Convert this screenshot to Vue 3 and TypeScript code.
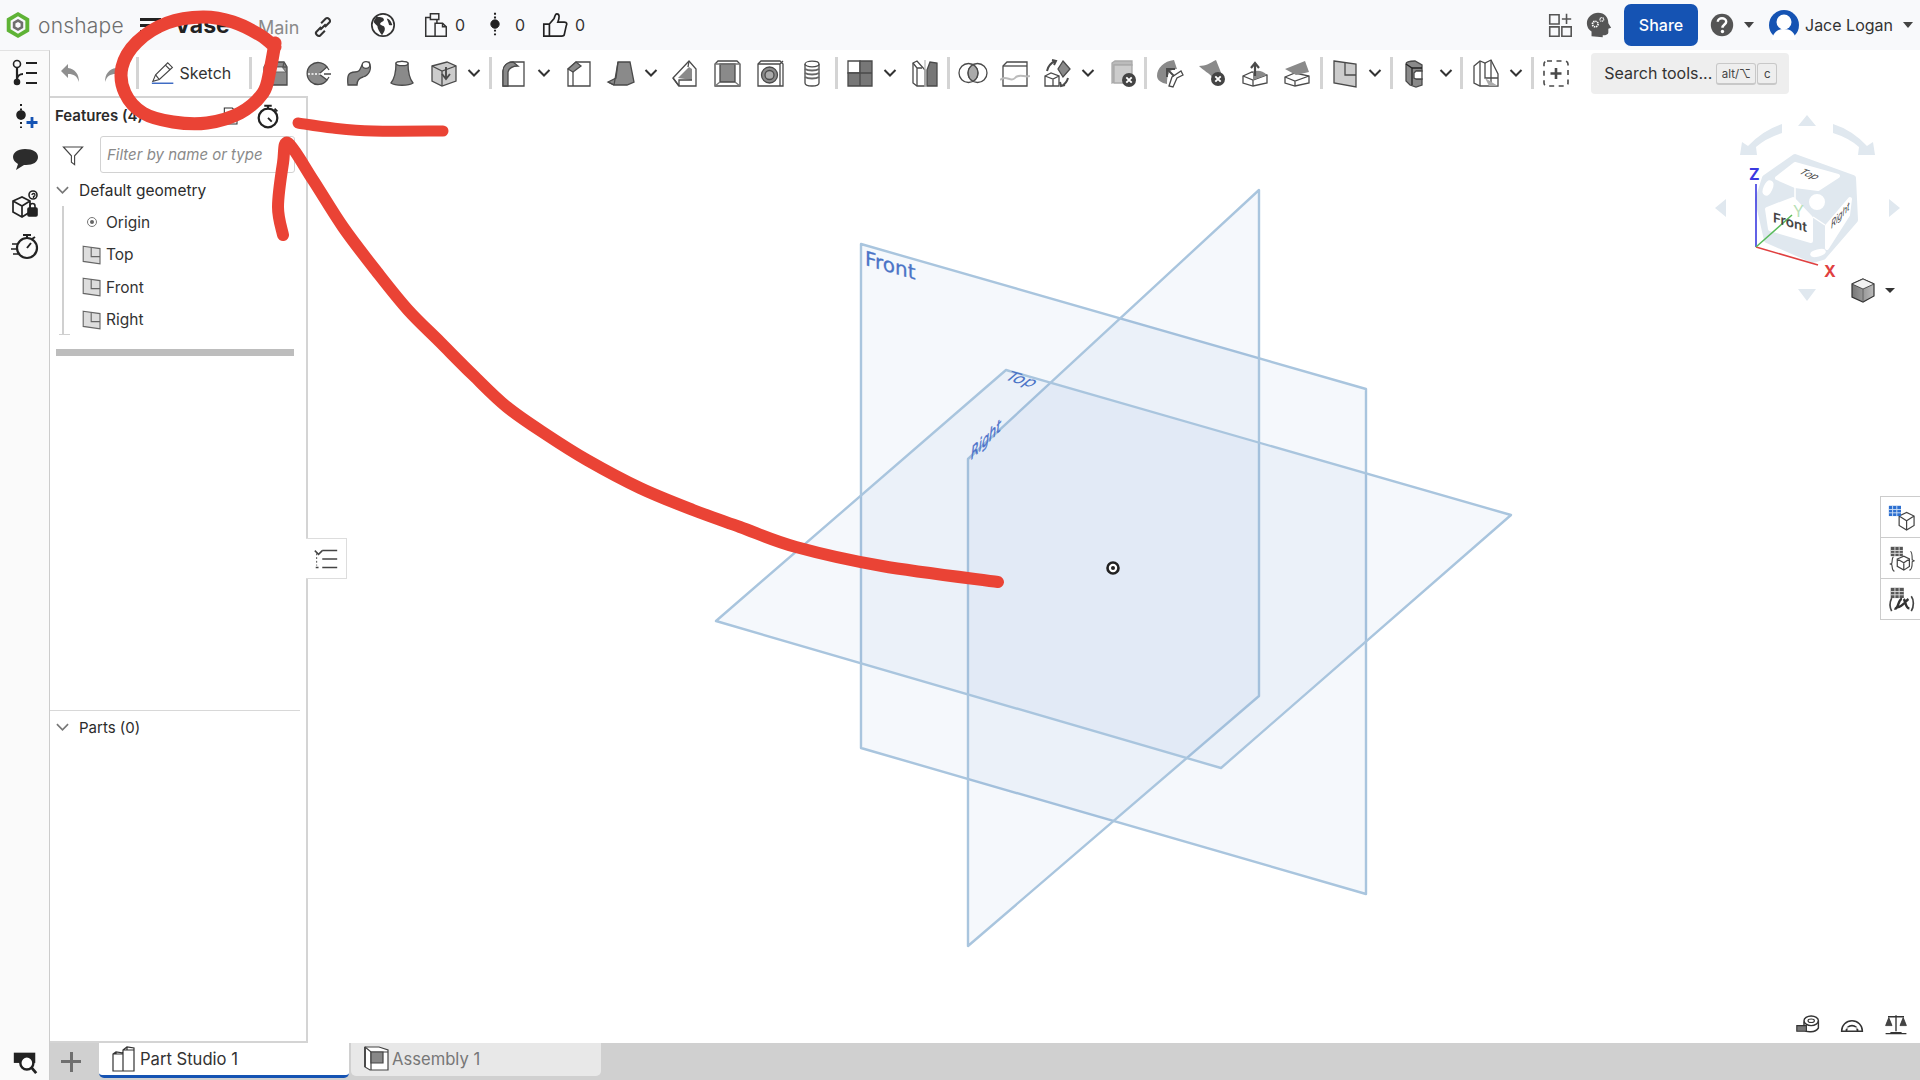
<script setup lang="ts">
const G = '#8a8a8a'
const icons: Record<string, string> = {
  undo: `<path d="M12 6 5 13l7 7v-4c6 0 9 2 11 8 0-8-4-13-11-14z" fill="#8f8f8f" stroke="none"/>`,
  redo: `<path d="M18 6l7 7-7 7v-4c-6 0-9 2-11 8 0-8 4-13 11-14z" fill="#8f8f8f" stroke="none"/>`,
  pencil: `<path d="M3 24l3-7L19 4l5 5-14 13z" fill="#fff"/><path d="M16.500 6.500l5 5M6 17l4 5"/><path d="M2 26h23" stroke="#3f6cc4" stroke-width="1.600"/>`,
  extrude: `<path d="M4 9l3-5h17l3 5v18H4z" fill="${G}"/><path d="M4 9h23M7 4l1 5M24 4l-1 5" stroke="#555"/><path d="M9 9h13l4 5H8z" fill="#eee" stroke="#666" stroke-width="1"/>`,
  revolve: `<path d="M25 9a11 11 0 1 0 0 13l-8-6z" fill="${G}"/><path d="M6 16h23" stroke="#fff" stroke-dasharray="2 1.500"/><path d="M22 16h7M25 9l2 3M25 22l2-3"/>`,
  sweep: `<path d="M4 27c-1-9 0-13 7-13 5 0 5-3 7-7l7-3c3 6 1 13-6 15-4 1-6 3-6 8z" fill="${G}"/><ellipse cx="22" cy="7" rx="3.800" ry="3.400" fill="#fff"/>`,
  loft: `<path d="M9 5c2-2 10-2 12 0 0 8 1 15 5 20-4 3-18 3-22 0 4-5 5-12 5-20z" fill="${G}"/><ellipse cx="15" cy="5.500" rx="6" ry="2.200" fill="#fff"/>`,
  thicken: `<path d="M3 8l15-4 9 4v15l-14 5-10-5z" fill="#ccc"/><path d="M3 8l10 5 14-5M13 13v15"/><path d="M17 9v11M13 16l4 5 4-5" stroke-width="1.900"/>`,
  fillet: `<path d="M4 13c0-5 4-9 10-9h11v24H4z" fill="#fff"/><path d="M4 13c0-5 4-9 10-9l5 4c-6 0-9 2-10 6v14H4z" fill="${G}"/>`,
  chamfer: `<path d="M4 11l8-7h14v24H4z" fill="#fff"/><path d="M4 11l8-7 5 4-8 6z" fill="${G}"/><path d="M9 14v14"/>`,
  draft: `<path d="M2 24l8-4 0 0L12 4h12l4 20-7 3H8z" fill="${G}"/><path d="M12 4l-4 23M2 24l6 3"/>`,
  rib: `<path d="M3 20L19 3l7 8v17H9z" fill="#fff"/><path d="M8 20l11-11 3 2v11z" fill="${G}" stroke="none"/><path d="M3 20l6 8M9 28l0-6H22M19 3l-1 6"/>`,
  shell: `<path d="M3 6l3-3h19l3 3v22H3z" fill="#fff"/><path d="M8 6h15v18H8z" fill="${G}"/><path d="M3 6h25M8 24l-5 4M23 24l5 4" stroke="#777"/>`,
  hole: `<path d="M3 6l3-3h19l3 3v22H3z" fill="#fff"/><path d="M3 6h22v22M25 6l3-3"/><circle cx="14.500" cy="17" r="8" fill="${G}"/><circle cx="14.500" cy="17" r="4.500" fill="#aaa"/>`,
  thread: `<path d="M8 6v19c0 4 14 4 14 0V6" fill="#fff"/><ellipse cx="15" cy="6" rx="7" ry="2.800" fill="#fff"/><path d="M8 11c3 2 11 2 14 0M8 15c3 2 11 2 14 0M8 19c3 2 11 2 14 0" stroke-width="1.800" stroke="#666"/>`,
  pattern: `<path d="M3 3h12v12H3z" fill="#fff"/><path d="M15 3h12v12H15zM3 15h12v13H3zM15 15h12v13H15z" fill="#777"/>`,
  mirror: `<path d="M3 5l4-2 8 9v16H7l-4-3z" fill="#fff"/><path d="M3 5l4 5v18M7 10h5"/><path d="M17 12l3-8 7 1v23H17z" fill="#777"/><path d="M15 2v27" stroke="#bbb"/>`,
  boolean: `<circle cx="10.500" cy="15" r="9.500"/><circle cx="19.500" cy="15" r="9.500"/><path d="M15 6.700a9.500 9.500 0 0 1 0 16.600a9.500 9.500 0 0 1 0-16.600z" fill="#aaa"/>`,
  split: `<path d="M3 8l4-4h20v24H3z" fill="#fff"/><path d="M3 8h24"/><path d="M0 22c6-6 11 3 15-2s10 0 15-2" stroke="#bbb" stroke-width="2"/>`,
  transform: `<path d="M3 18l6-3 8 3v10H3zM3 18l8 3 6-3M11 21v7" fill="#fff"/><path d="M21 3l7 8-7 8-5-8z" fill="${G}"/><path d="M5 13c1-5 4-8 8-10M10 2l4 1-2 4M26 20c-1 4-3 6-6 8M18 24l1 4 4-1" stroke-width="2"/>`,
  delete: `<path d="M5 5l3-2h17v4H7v17l-2 1z" fill="#bbb" stroke="#aaa"/><path d="M7 7h18v18H7z" fill="#ccc" stroke="#aaa"/><circle cx="22" cy="22" r="7" fill="#444" stroke="none"/><path d="M19.300 19.300l5.400 5.400M24.700 19.300l-5.400 5.400" stroke="#fff" stroke-width="1.900"/>`,
  surfaceMove: `<path d="M2 18C2 10 9 3 19 2l3 9c-8 0-10 6-10 15l-4-1c-4-2-6-4-6-7z" fill="${G}" stroke="none"/><path d="M14 28l3-9 9-6 2 4-6 3-4 9z" fill="#fff"/><path d="M12 19V11h8M12 11l7 7" stroke-width="1.900"/>`,
  surfaceDelete: `<path d="M2 8c7 0 11-3 17-6l4 10 3 8-11-1C12 15 7 13 2 8z" fill="${G}" stroke="none"/><circle cx="21" cy="21" r="7" fill="#444" stroke="none"/><path d="M18.300 18.300l5.400 5.400M23.700 18.300l-5.400 5.400" stroke="#fff" stroke-width="1.900"/>`,
  moveFace: `<path d="M3 18l9-4 15 3v8l-14 3-10-3z" fill="#fff"/><path d="M3 18l10 4 14-5M13 22v6"/><path d="M13 14c4-2 9-2 14 3l-14 5z" fill="${G}" stroke="none"/><path d="M15 18V6M11 10l4-5 4 5" stroke-width="2.200"/>`,
  replaceFace: `<path d="M3 19l10-4 14 3v7l-14 3-10-3z" fill="#fff"/><path d="M3 19l10 4 14-5M13 23v5"/><path d="M3 11l20-8 4 11-13 3z" fill="${G}" stroke="none"/>`,
  plane: `<path d="M4 3l22 3v23L4 25z" fill="#ccc"/><path d="M15 4.500V17h11"/>`,
  frame: `<path d="M5 6c0-2 5-3 9-3l7 4v6h-6l-2 2v5l2 1h6v6l-6 2-6-2-4-4z" fill="${G}"/><path d="M5 6l6 4h10M11 10v17" stroke="#222"/><path d="M15 13h6v8h-6" fill="#fff"/>`,
  sheet: `<path d="M3 8l6-5 5 2 6-3 7 14v12H9l-6-3z" fill="#fff"/><path d="M9 3v25M20 2v26M14 5v15h13"/><path d="M14 20l13 8h-9z" fill="#aaa" stroke="none"/>`,
  addcustom: `<rect x="3" y="3" width="24" height="25" rx="3" stroke-dasharray="5 4.500" stroke-width="1.600"/><path d="M15 10v11M9.500 15.500h11" stroke-width="2.600"/>`,
  tree: `<circle cx="7" cy="6" r="3.500"/><circle cx="7" cy="24" r="2.500" fill="#222"/><path d="M7 10v12c0-4 3-6 6-6M16 5h11M16 15h11M16 25h11" stroke-width="2.200"/>`,
  insert: `<path d="M11 3v24" stroke-dasharray="2 2.500" stroke-width="2"/><circle cx="11" cy="14" r="4" fill="#222"/><path d="M22 16v11M16.500 21.500h11" stroke="#1553b3" stroke-width="2.800"/>`,
  chat: `<path d="M15 5C7 5 3 9 3 13c0 3 2 5 5 7l-2 6 8-5h2c7 0 12-3 12-8S23 5 15 5z" fill="#2c2c2c" stroke="none"/>`,
  cubeLock: `<path d="M3 12l9-4 8 4v11l-8 5-9-5zM3 12l9 5 8-5M12 17v11" stroke-width="1.700"/><circle cx="23" cy="6" r="4"/><path d="M22 6a1.500 1.500 0 1 1 1.500 1.500v1.500" stroke-width="1.300"/><rect x="18" y="19" width="9" height="8" rx="1" fill="#222"/><path d="M20 19v-2a2.500 2.500 0 0 1 5 0v2"/>`,
  timer: `<circle cx="17" cy="16" r="10" stroke-width="2.200"/><path d="M13 3h8M17 3v3M22 7l3-2M17 16l4-5" stroke-width="2"/><path d="M2 12h6M1 17h5M3 22h5" stroke-width="1.500"/>`,
  timerPlain: `<circle cx="15" cy="16" r="10" stroke-width="2.400"/><path d="M11 3h8M15 3v3M22 6l3 3M15 16l4 4" stroke-width="2"/>`,
  search: `<path d="M3 5h23v11H3z" fill="#222" stroke="none"/><circle cx="17" cy="16" r="7" fill="#fff" stroke="#222" stroke-width="2.600"/><path d="M22 21l5 6" stroke="#222" stroke-width="3"/>`,
  globe: `<circle cx="15" cy="15" r="12" fill="#fff" stroke-width="1.800"/><path d="M8 6c3 1 7 0 8 3 0 3-4 2-4 5 0 2 5 1 5 5 0 3-2 5-3 7-3-4-5-7-5-10-2-2-4-3-4-5z" fill="#333" stroke="none"/><path d="M19 8c2 0 5 3 6 7-2 1-4 0-4-2z" fill="#333" stroke="none"/>`,
  docs: `<path d="M4 7h12v20H4z"/><path d="M9 3h9v6H9z" fill="#f8f9fb"/><path d="M14 13h8l4 4v10H14z" fill="#f8f9fb"/><path d="M22 13v4h4"/>`,
  pin: `<circle cx="15" cy="14" r="4.500" fill="#222"/><path d="M15 2v6M15 20v7" stroke-dasharray="2 2" stroke-width="2.200"/>`,
  thumb: `<path d="M3 14h6v13H3zM9 14l5-6c1-2 1-5 3-5 3 0 3 4 1 9h7c3 0 3 2 2 4l-2 9c0 1-1 2-3 2H9" fill="#f8f9fb" stroke-width="1.800"/>`,
  link: `<path d="M13 11l5-5c2-2 6 2 4 4l-5 5M17 19l-5 5c-2 2-6-2-4-4l5-5M12 18l6-6" stroke-width="2.200"/>`,
  apps: `<path d="M4 4h10v10H4zM4 17h10v10H4zM17 17h10v10H17zM22 3v11M17 8.500h10" stroke="#555" stroke-width="1.700"/>`,
  head: `<path d="M7 27v-5c-3-2-5-5-5-9C2 7 8 2 14 2c7 0 11 5 11 11l3 5-3 1v4c0 2-2 3-6 3v2z" fill="#555" stroke="none"/><circle cx="11" cy="14" r="3" fill="none" stroke="#fff" stroke-width="1.800" stroke-dasharray="1.500 .8"/><circle cx="18" cy="9" r="2" fill="none" stroke="#fff" stroke-width="1.400" stroke-dasharray="1 .6"/>`,
  help: `<circle cx="15" cy="15" r="12" fill="#555" stroke="none"/><path d="M10.500 11.500c0-5 9-5 9 0 0 3-4 3-4 6.500" stroke="#fff" stroke-width="2.600"/><circle cx="15.500" cy="22" r="1.800" fill="#fff" stroke="none"/>`,
  partStudio: `<path d="M4 10l3-2 7 1v18H4zM14 6l4-3 7 1v23H14zM4 10h10M14 6h11M7 8v2M18 3v3" fill="#fff"/>`,
  assembly: `<path d="M4 3h14l9 3v20H9l-5-3z" fill="#fff"/><path d="M4 3l6 5h17M10 8v18"/><path d="M10 8h12v11H10z" fill="#888"/><path d="M4 3v20" stroke-width="1.800"/>`,
  planeSmall: `<path d="M3 4l21 3v19L3 23z" fill="#ddd"/><path d="M13 5.500V17h11"/>`,
  funnel: `<path d="M3 5h24L17 16v11l-4-3v-8z"/>`,
  listIndent: `<path d="M11 6h16M11 15h16M11 24h16M3 6l4 4 4-4M4 24h3" stroke-width="1.600"/><path d="M5 9v13" stroke-dasharray="2 2"/>`,
  doc: `<path d="M5 3h12l7 7v17H5z" fill="#fff"/>`,
  tableCube: `<path d="M13 14l8-4 8 4v10l-8 5-8-5zM13 14l8 5 8-5M21 19v10"/><path d="M2 3h13v11H2z" fill="#2d6fd0" stroke="none"/><path d="M2 7h13M2 10.500h13M6 3v11M10.500 3v11" stroke="#cfe0f5" stroke-width="1"/>`,
  tableBrace: `<path d="M11 16l7-3 6 3v8l-6 4-7-4zM11 16l7 4 6-4M18 20v8"/><path d="M4 3h13v10H4z" fill="#555" stroke="none"/><path d="M4 7h13M4 10h13M8.500 3v10M13 3v10" stroke="#ddd" stroke-width="1"/><path d="M7 14c-2 0-1 5-2 7l-2 .5 2 .5c1 2 0 7 3 7M25 8c2 0 2 6 2 9l2 1-2 1c0 3 0 9-3 9" stroke-width="1.200"/>`,
  tableFx: `<path d="M4 3h14v11H4z" fill="#555" stroke="none"/><path d="M4 7h14M4 10.500h14M8.500 3v11M13 3v11" stroke="#ddd" stroke-width="1"/><path d="M5 14c-2 4-2 10 0 14M26 12c3 4 3 11 0 16" stroke-width="1.800"/><path d="M8 25c4 2 4-10 8-10M18 15c2 3 2 10 6 10M23 15c-3 2-6 8-12 9" stroke="#333" stroke-width="2.600"/>`,
  tape: `<ellipse cx="19" cy="11" rx="9" ry="6" fill="#fff" stroke-width="1.800"/><ellipse cx="19" cy="11" rx="4" ry="2.200"/><path d="M10 12v10c3 4 14 4 18-2V11" fill="none" stroke-width="1.800"/><path d="M1 17h12v7H1z" fill="#777"/>`,
  protractor: `<path d="M2 24a13 13 0 0 1 26 0z" fill="#fff" stroke-width="1.800"/><path d="M8 24a7 7 0 0 1 14 0" stroke-width="2.200"/><path d="M5 20h20" stroke="#fff"/>`,
  scale: `<path d="M15 4v20M5 6h20M8 26h14M2 27h26" stroke-width="1.700"/><path d="M2 17l4-10 4 10zM20 17l4-10 4 10z" fill="#444" stroke-width="1"/>`,
}

type Tool = { t: 'icon' | 'caret' | 'sep' | 'sketch'; n?: string }
const seq = 'undo redo | @ | extrude revolve sweep loft thicken v | fillet v chamfer draft v rib shell hole thread | pattern v mirror | boolean split transform v delete | surfaceMove surfaceDelete moveFace replaceFace | plane v | frame v | sheet v | addcustom'
const tools: Tool[] = seq.split(' ').map((s): Tool =>
  s === '|' ? { t: 'sep' } : s === 'v' ? { t: 'caret' } : s === '@' ? { t: 'sketch' } : { t: 'icon', n: s },
)
const railIcons = ['tree', 'insert', 'chat', 'cubeLock', 'timer']
const treeRows = ['Top', 'Front', 'Right']
const sideTabs = ['tableCube', 'tableBrace', 'tableFx']
const measures = ['tape', 'protractor', 'scale']

function smooth(p: number[][]): string {
  let d = `M${p[0][0]} ${p[0][1]}`
  for (let i = 0; i < p.length - 1; i++) {
    const a = p[Math.max(i - 1, 0)], b = p[i], c = p[i + 1], e = p[Math.min(i + 2, p.length - 1)]
    d += ` C${b[0] + (c[0] - a[0]) / 6} ${b[1] + (c[1] - a[1]) / 6} ${c[0] - (e[0] - b[0]) / 6} ${c[1] - (e[1] - b[1]) / 6} ${c[0]} ${c[1]}`
  }
  return d
}
const inkCircle = smooth([[275,47],[260,35],[233,22],[203,17],[167,23],[137,42],[122,67],[125,93],[143,113],[173,122],[207,123],[240,113],[263,93],[270,70],[275,43]])
const inkLine = smooth([[298,123],[333,128],[373,131],[443,131]])
const inkArrow = smooth([[283,235],[278,207],[283,163],[288,143],[313,180],[343,227],[377,272],[408,310],[440,342],[473,375],[507,407],[547,435],[587,460],[640,488],[693,510],[740,527],[796,547],[882,566],[998,582]])
</script>

<template>
  <div class="app">
    <header class="topbar">
      <svg class="logo" viewBox="0 0 30 32"><path d="M15 1l13 7.500v15L15 31 2 23.500v-15z" fill="#5fb336"/><path d="M15 6l8.500 5v10L15 26l-8.500-5V11z" fill="#f8f9fb"/><path d="M15 9l6 3.500v7L15 23l-6-3.500v-7z" fill="#6f6f6f"/><path d="M15 12.500l3 1.800v3.500l-3 1.700-3-1.700v-3.500z" fill="#f8f9fb"/></svg>
      <span class="brand">onshape</span>
      <span class="burger"><i></i><i></i><i></i></span>
      <span class="doc-name">Vase</span>
      <span class="branch">Main</span>
      <svg class="ic28 link" viewBox="0 0 30 30" fill="none" stroke="#333" v-html="icons.link"></svg>
      <svg class="ic28 globe" viewBox="0 0 30 30" fill="none" stroke="#333" v-html="icons.globe"></svg>
      <svg class="ic28 docs" viewBox="0 0 30 30" fill="none" stroke="#333" stroke-width="1.600" v-html="icons.docs"></svg>
      <span class="count">0</span>
      <svg class="ic28 pin" viewBox="0 0 30 30" fill="none" stroke="#222" v-html="icons.pin"></svg>
      <span class="count">0</span>
      <svg class="ic28 thumb" viewBox="0 0 30 30" fill="none" stroke="#222" v-html="icons.thumb"></svg>
      <span class="count">0</span>
      <span class="spacer"></span>
      <svg class="ic28" viewBox="0 0 30 30" fill="none" stroke="#555" v-html="icons.apps"></svg>
      <svg class="ic28 head" viewBox="0 0 30 30" fill="none" v-html="icons.head"></svg>
      <button class="share">Share</button>
      <svg class="ic28 help" viewBox="0 0 30 30" fill="none" v-html="icons.help"></svg>
      <span class="tri help-tri"></span>
      <svg class="avatar" viewBox="0 0 30 30"><circle cx="15" cy="15" r="15" fill="#1553b3"/><circle cx="15" cy="12" r="7.500" fill="#fff"/><path d="M3 30c1-8 6-11 12-11s11 3 12 11z" fill="#fff"/></svg>
      <span class="user">Jace Logan</span>
      <span class="tri user-tri"></span>
    </header>

    <div class="under">
      <nav class="rail">
        <span v-for="r in railIcons" :key="r" class="rail-item">
          <svg class="ic30" viewBox="0 0 30 30" fill="none" stroke="#222" stroke-width="1.600" v-html="icons[r]"></svg>
        </span>
        <span class="rail-item rail-bottom">
          <svg class="ic28" viewBox="0 0 30 30" fill="none" v-html="icons.search"></svg>
        </span>
      </nav>

      <div class="main">
        <div class="toolbar">
          <template v-for="(it, i) in tools" :key="i">
            <span v-if="it.t === 'sep'" class="sep"></span>
            <svg v-else-if="it.t === 'caret'" class="caret" viewBox="0 0 14 10" fill="none" stroke="#333" stroke-width="2"><path d="M1.500 2l5.500 5.500L12.500 2"/></svg>
            <span v-else-if="it.t === 'sketch'" class="sketch">
              <svg class="ic28" viewBox="0 0 30 30" fill="none" stroke="#444" stroke-width="1.200" v-html="icons.pencil"></svg>
              <span>Sketch</span>
            </span>
            <span v-else class="tool">
              <svg class="ic30" viewBox="0 0 30 30" fill="none" stroke="#4a4a4a" stroke-width="1.300" v-html="icons[it.n as string]"></svg>
            </span>
          </template>
          <div class="search">
            <span class="search-text">Search tools...</span>
            <kbd class="k1">alt/⌥</kbd><kbd class="k2">c</kbd>
          </div>
        </div>

        <div class="work">
          <aside class="panel">
            <div class="panel-head">
              <strong>Features (4)</strong>
              <svg class="ic20 pdoc" viewBox="0 0 30 30" fill="none" stroke="#333" stroke-width="1.600" v-html="icons.doc"></svg>
              <svg class="ic28 ptimer" viewBox="0 0 30 30" fill="none" stroke="#222" v-html="icons.timerPlain"></svg>
            </div>
            <div class="filter">
              <svg class="ic24 funnel" viewBox="0 0 30 30" fill="none" stroke="#444" stroke-width="1.400" v-html="icons.funnel"></svg>
              <div class="filter-input">Filter by name or type</div>
            </div>
            <div class="group">
              <svg class="chev" viewBox="0 0 14 10" fill="none" stroke="#777" stroke-width="1.800"><path d="M1 2l6 6 6-6"/></svg>
              <span>Default geometry</span>
            </div>
            <div class="tree">
              <div class="row">
                <span class="row-ic"><svg class="origin" viewBox="0 0 12 12" fill="none" stroke="#777"><circle cx="6" cy="6" r="4.500"/><circle cx="6" cy="6" r="2" fill="#666" stroke="none"/></svg></span>
                <span>Origin</span>
              </div>
              <div v-for="r in treeRows" :key="r" class="row">
                <span class="row-ic"><svg class="ic24" viewBox="0 0 28 30" fill="none" stroke="#666" stroke-width="1.400" v-html="icons.planeSmall"></svg></span>
                <span>{{ r }}</span>
              </div>
            </div>
            <div class="hbar"></div>
            <div class="panel-fill"></div>
            <div class="group parts">
              <svg class="chev" viewBox="0 0 14 10" fill="none" stroke="#777" stroke-width="1.800"><path d="M1 2l6 6 6-6"/></svg>
              <span>Parts (0)</span>
            </div>
            <button class="collapse">
              <svg class="ic28" viewBox="0 0 30 30" fill="none" stroke="#444" v-html="icons.listIndent"></svg>
            </button>
          </aside>
          <div class="viewport">
            <div class="side-tabs">
              <span v-for="s in sideTabs" :key="s" class="side-tab">
                <svg class="ic28" viewBox="0 0 30 30" fill="none" stroke="#444" stroke-width="1.300" v-html="icons[s]"></svg>
              </span>
            </div>
            <div class="measures">
              <svg v-for="m in measures" :key="m" class="ic24" viewBox="0 0 30 30" fill="none" stroke="#333" stroke-width="1.400" v-html="icons[m]"></svg>
            </div>
          </div>
        </div>

        <div class="tabs">
          <span class="plus"><i></i><i></i></span>
          <div class="tab active">
            <svg class="ic30" viewBox="0 0 30 30" fill="none" stroke="#333" stroke-width="1.200" v-html="icons.partStudio"></svg>
            <span>Part Studio 1</span>
          </div>
          <div class="tab">
            <svg class="ic30" viewBox="0 0 30 30" fill="none" stroke="#444" stroke-width="1.200" v-html="icons.assembly"></svg>
            <span>Assembly 1</span>
          </div>
        </div>
      </div>
    </div>

    <svg class="canvas" viewBox="0 0 1920 1080">
      <defs>
        <linearGradient id="vc" x1="0" x2="1" y1="0" y2="0"><stop offset="0" stop-color="#777"/><stop offset="1" stop-color="#bbb"/></linearGradient>
      </defs>
      <g fill="#3778bc" fill-opacity=".05" stroke="#a9c5de" stroke-width="2.400" stroke-linejoin="round">
        <path d="M861 244L1366 389V894L861 748Z"/>
        <path d="M968 459L1259 190V696L968 946Z"/>
        <path d="M1006 370L1511 515L1221 768L716 621Z"/>
      </g>
      <g class="plane-label" fill="#4a73c6">
        <text transform="matrix(1 .29 0 1 865 265)" font-size="20" font-weight="500" stroke="#4a73c6" stroke-width=".3">Front</text>
        <text transform="matrix(1 .29 -.75 .65 1003 379)" font-size="17">Top</text>
        <text transform="matrix(.66 -.66 0 1 971 460)" font-size="17" font-style="italic" stroke="#4a6ccf" stroke-width=".4">Right</text>
      </g>
      <circle cx="1113" cy="568" r="5.500" fill="#fff" stroke="#222" stroke-width="2.600"/>
      <circle cx="1113" cy="568" r="2" fill="#222"/>

      <g fill="#e0e8ef">
        <path d="M1807 115l9 11h-18zM1715 208l11-9v18zM1900 208l-11-9v18zM1807 301l-9-12h18z"/>
        <path d="M1782 124V133Q1766 138 1756 147L1757 155H1740L1742 142L1748 146Q1763 130 1782 124Z"/>
        <path d="M1833 124V133Q1849 138 1859 147L1858 155H1875L1873 142L1867 146Q1852 130 1833 124Z"/>
        <path d="M1795 157L1853 178L1855 220L1823 257L1813 260L1767 240L1758 200L1765 178Z" stroke="#e0e8ef" stroke-width="6" stroke-linejoin="round"/>
      </g>
      <g fill="#fff" stroke="#fff" stroke-width="4" stroke-linejoin="round">
        <path d="M1777 178L1795 164L1838 176L1818 189L1795 186Z"/>
        <path d="M1767 209L1793 199L1811 218V241L1770 229Z"/>
        <path d="M1827 226L1850 199L1848 215L1827 248Z"/>
        <circle cx="1817" cy="202" r="6"/>
        <ellipse cx="1768" cy="188" rx="2.500" ry="6" transform="rotate(25 1768 188)"/>
        <ellipse cx="1818" cy="253" rx="6" ry="1.500" transform="rotate(-15 1818 253)"/>
      </g>
      <path d="M1795 187V199M1813 217L1825 225" stroke="#fff" stroke-width="1.500"/>
      <path d="M1756 247V184" stroke="#3a3ae0" stroke-width="1.600"/>
      <path d="M1756 247L1818 265" stroke="#e04040" stroke-width="1.600"/>
      <path d="M1756 247L1792 215" stroke="#58bb5a" stroke-width="1.500"/>
      <g class="axis" font-size="16" font-weight="700">
        <text x="1749" y="180" fill="#3a3ae0">Z</text>
        <text x="1824" y="277" fill="#e04040">X</text>
        <text x="1793" y="217" fill="#b7dfb7" font-weight="400">Y</text>
      </g>
      <g class="axis" fill="#444">
        <text transform="matrix(1 .3 0 1 1773 222)" font-size="13.500" font-weight="600">Front</text>
        <text transform="matrix(.9 .35 -.7 .6 1798 173)" font-size="11" font-style="italic">Top</text>
        <text transform="matrix(.7 -.75 0 1 1831 229)" font-size="11" font-style="italic">Right</text>
      </g>
      <path d="M1863 279l11 5v12l-11 6-11-5v-13z" fill="url(#vc)" stroke="#333" stroke-width="1.200"/>
      <path d="M1852 284l11-5 11 5-11 5z" fill="#f2f2f2" stroke="#333" stroke-width=".8"/>
      <path d="M1863 289v13" stroke="#555" stroke-width=".8"/>
      <path d="M1885 288h10l-5 5z" fill="#333"/>

      <g fill="none" stroke="#ea4335" stroke-linecap="round" stroke-linejoin="round">
        <path :d="inkCircle" stroke-width="13"/>
        <path :d="inkLine" stroke-width="11"/>
        <path :d="inkArrow" stroke-width="12"/>
      </g>
    </svg>
  </div>
</template>

<style>
html, body { margin: 0; background: #fff; }
</style>

<style scoped>
.app {
  position: relative;
  width: 1920px;
  height: 1080px;
  overflow: hidden;
  display: flex;
  flex-direction: column;
  background: #fff;
  color: #2b2b2b;
  font-family: Inter, "Noto Sans", sans-serif;
  font-size: 15px;
}
.ic20 { width: 20px; height: 20px; flex: none; }
.ic24 { width: 24px; height: 24px; flex: none; }
.ic28 { width: 28px; height: 28px; flex: none; }
.ic30 { width: 30px; height: 30px; flex: none; }

.topbar {
  height: 50px;
  flex: none;
  display: flex;
  align-items: center;
  background: #f8f9fb;
}
.logo { width: 26px; height: 28px; margin-left: 5px; flex: none; }
.brand { margin-left: 7px; font-size: 21px; color: #6e6e6e; font-weight: 300; letter-spacing: .2px; width: 102px; }
.burger { display: flex; flex-direction: column; gap: 3px; width: 21px; }
.burger i { display: block; height: 3px; background: #222; }
.doc-name { margin-left: 13px; font-size: 23px; font-weight: 700; color: #222; width: 84px; }
.branch { font-size: 18px; color: #8a8a8a; width: 51px; padding-top: 4px; }
.link { margin-top: 4px; }
.globe { margin-left: 32px; }
.docs { margin-left: 25px; }
.count { margin-left: 5px; font-size: 16px; color: #333; width: 11px; }
.pin { margin-left: 15px; }
.thumb { margin-left: 15px; }
.pin + .count, .thumb + .count { margin-left: 6px; }
.spacer { flex: 1; }
.head { margin-left: 11px; }
.share {
  margin-left: 11px;
  width: 74px;
  height: 42px;
  border: 0;
  border-radius: 7px;
  background: #1553b3;
  color: #fff;
  font: 500 16px Inter, "Noto Sans", sans-serif;
}
.help { margin-left: 10px; }
.tri { width: 0; height: 0; border: 5px solid transparent; border-top: 6px solid #444; border-bottom: 0; flex: none; }
.help-tri { margin-left: 8px; }
.avatar { width: 30px; height: 30px; margin-left: 15px; flex: none; }
.user { margin-left: 6px; font-size: 16px; width: 98px; color: #333; white-space: nowrap; }
.user-tri { margin-right: 7px; }

.under { flex: 1; display: flex; min-height: 0; }
.rail {
  width: 49px;
  flex: none;
  display: flex;
  flex-direction: column;
  background: #fafafa;
  border-right: 1px solid #ccc;
  border-top: 1px solid #e2e2e2;
}
.rail-item { height: 43px; display: flex; align-items: center; justify-content: center; flex: none; }
.rail-item:nth-child(4) { margin-top: 2px; }
.rail-bottom { margin-top: auto; height: 36px; }

.main { flex: 1; min-width: 0; display: flex; flex-direction: column; }
.toolbar { height: 46px; flex: none; display: flex; align-items: center; }
.tool { width: 42.3px; height: 30px; display: flex; align-items: center; justify-content: center; flex: none; }
.caret { width: 14px; height: 10px; padding: 0 2px; margin-right: 4px; flex: none; }
.sep { width: 3px; height: 32px; margin: 0 1.500px; background: #d4d4d4; flex: none; }
.sketch { width: 107px; display: flex; align-items: center; gap: 2px; padding-left: 9px; box-sizing: border-box; flex: none; font-size: 16px; color: #333; }
.search {
  margin-left: 14px;
  width: 198px;
  height: 41px;
  box-sizing: border-box;
  padding-left: 13px;
  display: flex;
  align-items: center;
  background: #eee;
  border-radius: 4px;
  flex: none;
}
.search-text { font-size: 16px; color: #333; width: 112px; white-space: nowrap; }
kbd {
  font-family: inherit;
  font-size: 11.500px;
  height: 22px;
  line-height: 21px;
  box-sizing: border-box;
  border: 1px solid #c8c8c8;
  border-bottom-width: 2px;
  border-radius: 3px;
  text-align: center;
  color: #444;
  margin-top: 2px;
}
.k1 { width: 40px; }
.k2 { width: 20px; margin-left: 1px; }

.work { flex: 1; display: flex; min-height: 0; }
.panel {
  position: relative;
  width: 258px;
  flex: none;
  box-sizing: border-box;
  display: flex;
  flex-direction: column;
  border-top: 2px solid #d4d4d4;
  border-right: 2px solid #d4d4d4;
  border-bottom: 2px solid #d4d4d4;
}
.panel-head { height: 37px; box-sizing: border-box; padding-bottom: 2px; display: flex; align-items: center; padding-left: 5px; font-size: 15px; }
.panel-head strong { width: 166px; font-weight: 600; white-space: nowrap; }
.ptimer { margin-left: 13px; margin-top: 3px; }
.filter { height: 39px; display: flex; align-items: center; }
.funnel { margin-left: 11px; }
.filter-input {
  margin-left: 15px;
  width: 195px;
  height: 37px;
  box-sizing: border-box;
  border: 1px solid #d2d2d2;
  border-radius: 3px;
  padding-left: 6px;
  line-height: 36px;
  font-size: 15px;
  font-style: italic;
  color: #8a8a8a;
  background: #fff;
}
.group { display: flex; align-items: center; height: 32px; padding-left: 6px; font-size: 15.500px; }
.chev { width: 13px; height: 10px; margin-right: 10px; flex: none; }
.tree {
  margin-left: 12px;
  width: 230px;
  height: 129px;
  border-left: 2px solid #d0d0d0;
  box-sizing: border-box;
  position: relative;
  font-size: 15.500px;
}
.tree::after {
  content: "";
  position: absolute;
  left: -5px;
  bottom: 0;
  width: 11px;
  height: 1px;
  background: #d0d0d0;
}
.row { height: 32.500px; display: flex; align-items: center; color: #333; }
.row-ic { width: 24px; height: 24px; margin-left: 16px; margin-right: 2px; display: flex; align-items: center; justify-content: center; flex: none; }
.origin { width: 12px; height: 12px; }
.hbar { margin: 14px 0 0 6px; width: 238px; height: 7px; background: #bdbdbd; flex: none; }
.panel-fill { flex: 1; }
.parts { height: 32px; margin: 0 6px 298px 0; border-top: 1px solid #d8d8d8; font-size: 15px; }
.collapse {
  position: absolute;
  top: 440px;
  left: 256px;
  width: 41px;
  height: 41px;
  padding: 0;
  background: #fff;
  border: 1px solid #ddd;
  border-left: 0;
  display: flex;
  align-items: center;
  justify-content: center;
}
.viewport { flex: 1; position: relative; }
.side-tabs {
  position: absolute;
  right: 0;
  top: 400px;
  width: 40px;
  display: flex;
  flex-direction: column;
  background: #fff;
  border: 1px solid #ccc;
  border-right: 0;
  box-sizing: border-box;
}
.side-tab { height: 40px; display: flex; align-items: center; justify-content: center; }
.side-tab + .side-tab { border-top: 1px solid #ccc; }
.measures { position: absolute; right: 12px; bottom: 7px; display: flex; gap: 20px; }

.tabs { height: 37px; flex: none; display: flex; background: #d0d0d0; }
.plus { position: relative; width: 49px; flex: none; }
.plus i { position: absolute; background: #6f6f6f; }
.plus i:first-child { left: 11px; top: 17px; width: 20px; height: 3px; }
.plus i:last-child { left: 19.500px; top: 9px; width: 3px; height: 20px; }
.tab {
  width: 250px;
  height: 33px;
  margin-right: 2px;
  padding-bottom: 1px;
  background: #e8e8e8;
  border-radius: 0 0 5px 5px;
  display: flex;
  align-items: center;
  gap: 1px;
  padding-left: 10px;
  box-sizing: border-box;
  font-size: 16.600px;
  color: #777;
  flex: none;
}
.tab.active {
  height: 35px;
  padding-bottom: 0;
  background: #fff;
  color: #333;
  border-bottom: 3px solid #1553b3;
}
.canvas { position: absolute; left: 0; top: 0; width: 1920px; height: 1080px; pointer-events: none; }
.plane-label text { font-family: "DejaVu Sans", sans-serif; }
.axis text { font-family: Inter, sans-serif; }
</style>
